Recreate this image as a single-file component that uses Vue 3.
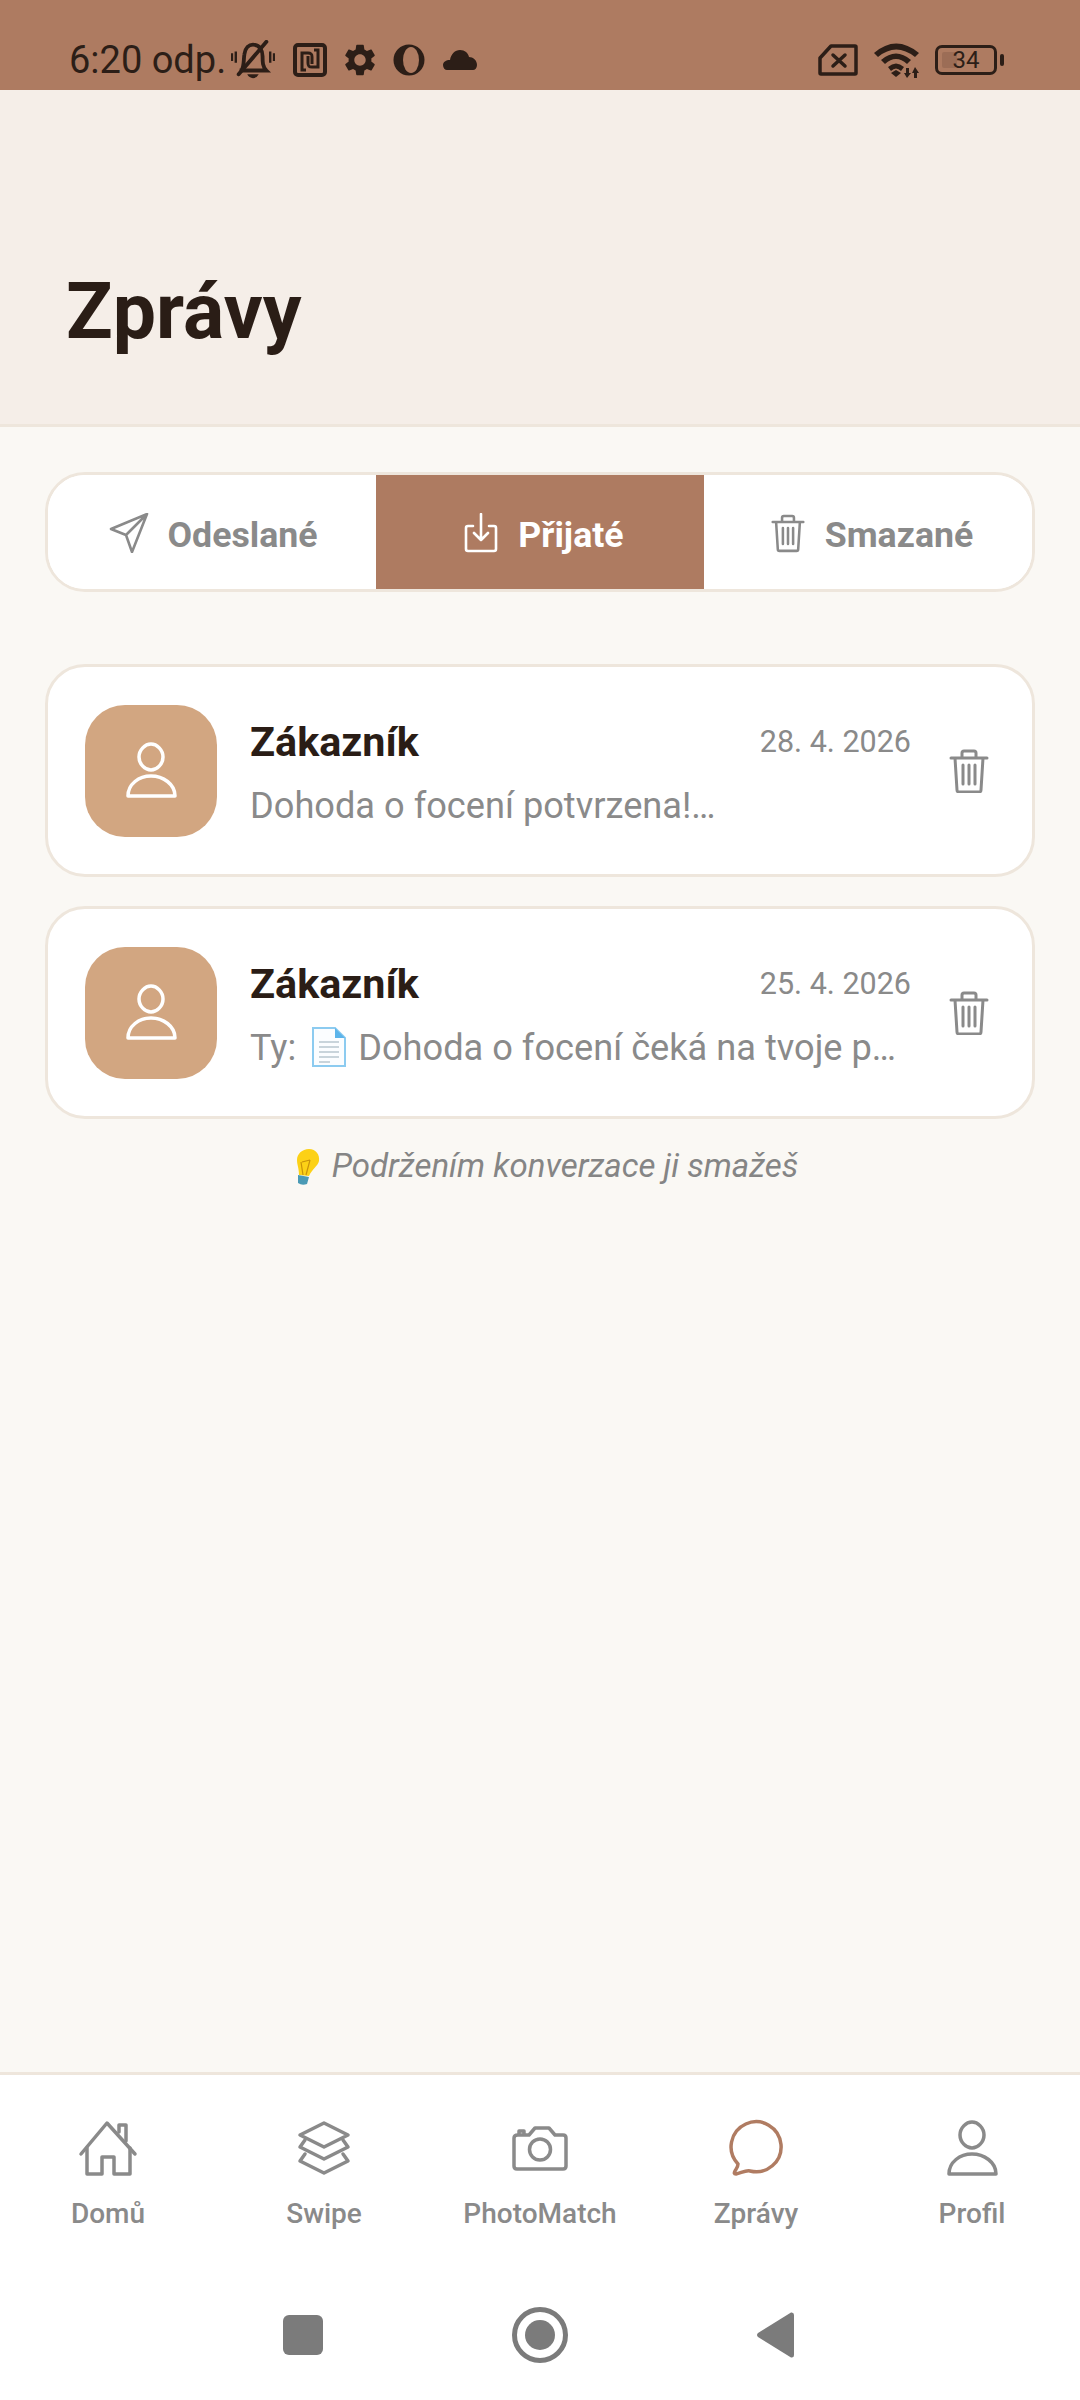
<script setup>
const conversations = [
  { id: 1, name: 'Zákazník', date: '28. 4. 2026', text: 'Dohoda o focení potvrzena!…' },
  { id: 2, name: 'Zákazník', date: '25. 4. 2026', prefix: 'Ty:', text: 'Dohoda o focení čeká na tvoje p…', doc: true },
]

const navItems = [
  { label: 'Domů', paths: ['M3 35 L29 4 L57 35', 'M9 29 V55 H24 V38 H36 V55 H52 V29', 'M41 13 V6 H48 V22'] },
  { label: 'Swipe', paths: ['M30 4 L54 16 L30 28 L6 16 Z', 'M11 21 L6 28 L30 40 L54 28 L49 21', 'M11 35 L6 42 L30 54 L54 42 L49 35'] },
  {
    label: 'PhotoMatch',
    paths: ['M8 16 H19 L25 9 H39 L45 16 H53 Q56 16 56 19 V47 Q56 50 53 50 H7 Q4 50 4 47 V19 Q4 16 8 16 Z', 'M30 20 A10.5 10.5 0 1 0 30 41 A10.5 10.5 0 1 0 30 20 Z', 'M9 15 V12 H14 V15'],
  },
  { label: 'Zprávy', active: true, paths: ['M12 45 A25 25 0 1 1 24 52 C20 51 15 54 10 55 C8 55 8 54 9 52 C10 50 12 48 12 45 Z'] },
  { label: 'Profil', paths: ['M30 3 C36 3 42 9 42 16 C42 23 36 29 30 29 C24 29 18 23 18 16 C18 9 24 3 30 3 Z', 'M7 55 C7 43 18 35 30 35 C42 35 54 43 54 55 Z'] },
]

const personPaths = navItems[4].paths
</script>

<template>
  <div class="screen">
    <div class="statusbar">
      <span class="time">6:20 odp.</span>
      <div class="status-icons">
        <svg width="44" height="40" viewBox="0 0 46 40" fill="none" stroke="#2c1e17" stroke-width="4">
          <path d="M11 31 C14 26 13 20 14 14 C15 7 19 4 23 4 C30 4 33 10 33 16 C33 22 33 27 37 31 H9" />
          <path d="M37 1 L8 35" stroke-linecap="round" />
          <path d="M1 13 V21 M5 11 V23 M41 11 V23 M45 13 V21" stroke-width="2.5" />
          <path d="M17 35 H29 Q27 39 23 39 Q19 39 17 35 Z" fill="#2c1e17" stroke="none" />
        </svg>
        <svg width="34" height="34" viewBox="0 0 34 34" fill="none" stroke="#2c1e17" stroke-width="4">
          <rect x="2" y="2" width="30" height="30" rx="3" />
          <path d="M13 27 H9 V10 H15 C19 10 19 12 19 14 V21 M21 7 H25 V24 H19 C15 24 15 22 15 20 V13" stroke-width="3" />
        </svg>
        <svg width="38" height="38" viewBox="0 0 24 24" fill="#2c1e17" class="gear">
          <path d="M19.14 12.94c.04-.3.06-.61.06-.94 0-.32-.02-.64-.07-.94l2.03-1.58c.18-.14.23-.41.12-.61l-1.92-3.32c-.12-.22-.37-.29-.59-.22l-2.39.96c-.5-.38-1.03-.7-1.62-.94l-.36-2.54c-.04-.24-.24-.41-.48-.41h-3.84c-.24 0-.43.17-.47.41l-.36 2.54c-.59.24-1.13.57-1.62.94l-2.39-.96c-.22-.08-.47 0-.59.22L2.74 8.87c-.12.21-.08.47.12.61l2.03 1.58c-.05.3-.09.63-.09.94s.02.64.07.94l-2.03 1.58c-.18.14-.23.41-.12.61l1.92 3.32c.12.22.37.29.59.22l2.39-.96c.5.38 1.03.7 1.62.94l.36 2.54c.05.24.24.41.48.41h3.84c.24 0 .44-.17.47-.41l.36-2.54c.59-.24 1.13-.56 1.62-.94l2.39.96c.22.08.47 0 .59-.22l1.92-3.32c.12-.22.07-.47-.12-.61l-2.01-1.58zM12 15.6c-1.98 0-3.6-1.62-3.6-3.6s1.62-3.6 3.6-3.6 3.6 1.62 3.6 3.6-1.62 3.6-3.6 3.6z" />
        </svg>
        <svg width="32" height="32" viewBox="0 0 32 32">
          <circle cx="16" cy="16" r="15.5" fill="#2c1e17" />
          <ellipse cx="18" cy="16" rx="8" ry="13" fill="#ae7b61" />
        </svg>
        <svg width="34" height="20" viewBox="0 0 34 20" fill="#2c1e17">
          <path d="M17 0 C22 0 25 3 26 7 C30 7 34 10 34 15 C34 18 32 20 30 20 H4 C2 20 0 18 0 15 C0 12 3 10 7 10 C8 4 12 0 17 0 Z" />
        </svg>
      </div>
      <div class="status-right">
        <svg width="40" height="32" viewBox="0 0 40 32" fill="none" stroke="#2c1e17" stroke-width="3.5" stroke-linejoin="round">
          <path d="M13 2 H37 Q38 2 38 3 V29 Q38 30 37 30 H3 Q2 30 2 29 V14 Z" />
          <path d="M15 11 L27 22 M27 11 L15 22" stroke-linecap="round" />
        </svg>
        <svg width="47" height="36" viewBox="0 0 47 36" fill="#2c1e17">
          <path d="M1 11 Q23 -8 46 11 L42 15 Q23 0 5 15 Z" />
          <path d="M8 18 Q23 5 38 18 L34 22 Q23 12 12 22 Z" />
          <path d="M15 25 Q23 18 31 25 L28 29 Q23 24 18 29 Z" />
          <path d="M18 31 L23 28 L28 31 L23 35 Z" />
          <path d="M33 26 H36 V31 H38 L34 36 L31 31 H33 Z M41 36 H44 V31 H46 L42 25 L39 31 H41 Z" />
        </svg>
        <div class="battery">
          <div class="battery-fill"></div>
          <span class="battery-text">34</span>
        </div>
        <div class="battery-tip"></div>
      </div>
    </div>

    <header class="page-header">
      <h1>Zprávy</h1>
    </header>

    <main class="content">
      <div class="tabs">
        <button class="tab sent" type="button">
          <svg width="40" height="40" viewBox="0 0 40 40" fill="none" stroke="#8a8a8a" stroke-width="2.6" stroke-linejoin="round">
            <path d="M38 1 L2 16 L17 22 L23 39 Z M38 1 L17 22" />
          </svg>
          Odeslané
        </button>
        <button class="tab active" type="button">
          <svg width="34" height="40" viewBox="0 0 34 40" fill="none" stroke="#fff" stroke-width="2.6" stroke-linecap="round" stroke-linejoin="round">
            <path d="M9 13 H4 Q2 13 2 15 V36 Q2 38 4 38 H30 Q32 38 32 36 V15 Q32 13 30 13 H25" />
            <path d="M17 1 V27 M10 20 L17 27 L24 20" />
          </svg>
          Přijaté
        </button>
        <button class="tab" type="button">
          <svg width="34" height="40" viewBox="0 0 40 44" fill="none" stroke="#8a8a8a" stroke-width="3" stroke-linecap="round" stroke-linejoin="round">
            <path d="M2 9 H38 M13 9 V4 Q13 2 15 2 H25 Q27 2 27 4 V9 M6 9 L8 41 Q8 43 10 43 H30 Q32 43 32 41 L34 9 M14 16 V35 M20 16 V35 M26 16 V35" />
          </svg>
          Smazané
        </button>
      </div>

      <div class="list">
        <article v-for="c in conversations" :key="c.id" class="card">
          <div class="avatar">
            <svg width="60" height="60" viewBox="0 0 60 60" fill="none" stroke="#fff" stroke-width="3.5" stroke-linejoin="round">
              <path v-for="p in personPaths" :key="p" :d="p" />
            </svg>
          </div>
          <div class="card-body">
            <div class="card-top">
              <span class="name">{{ c.name }}</span>
              <span class="date">{{ c.date }}</span>
            </div>
            <p class="preview">
              <template v-if="c.doc">{{ c.prefix }}<svg class="doc" width="34" height="40" viewBox="0 0 34 40">
                <path d="M1 1 H23 L33 11 V39 H1 Z" fill="#fbfdff" stroke="#8ccbf0" stroke-width="2" />
                <path d="M23 1 V11 H33 Z" fill="#5cb4ea" />
                <path d="M7 15 H27 M7 20 H27 M7 25 H27 M7 30 H27 M7 35 H18" stroke="#b9c6d0" stroke-width="1.6" />
              </svg></template>{{ c.text }}
            </p>
          </div>
          <svg class="trash" width="40" height="44" viewBox="0 0 40 44" fill="none" stroke="#8a8a8a" stroke-width="3" stroke-linecap="round" stroke-linejoin="round">
            <path d="M2 9 H38 M13 9 V4 Q13 2 15 2 H25 Q27 2 27 4 V9 M6 9 L8 41 Q8 43 10 43 H30 Q32 43 32 41 L34 9 M14 16 V35 M20 16 V35 M26 16 V35" />
          </svg>
        </article>
      </div>

      <p class="hint">
        <svg width="28" height="37" viewBox="0 0 28 37">
          <path d="M17 1 C24 1 28 7 27 13 C26 18 20 21 17 28 L7 27 C7 20 5 17 5 12 C5 6 10 1 17 1 Z" fill="#fcd116" />
          <path d="M9 14 L11 27 M18 12 L14 27 M10 14 L18 12" stroke="#c8920a" stroke-width="1.2" fill="none" />
          <path d="M6 27 L17 29 L15 36 Q10 38 6 35 Z" fill="#4a9ab5" />
        </svg>
        <em>Podržením konverzace ji smažeš</em>
      </p>
    </main>

    <nav class="bottom-nav">
      <div v-for="item in navItems" :key="item.label" class="nav-item">
        <svg width="60" height="60" viewBox="0 0 60 60" fill="none" :stroke="item.active ? '#b07c62' : '#8a8a8a'" stroke-width="3.5" stroke-linecap="round" stroke-linejoin="round">
          <path v-for="p in item.paths" :key="p" :d="p" />
        </svg>
        <span class="nav-label">{{ item.label }}</span>
      </div>
    </nav>

    <div class="system-nav">
      <div class="sys-square"></div>
      <svg width="56" height="56" viewBox="0 0 56 56">
        <circle cx="28" cy="28" r="25.5" fill="none" stroke="#7b7b7b" stroke-width="5" />
        <circle cx="28" cy="28" r="15" fill="#7b7b7b" />
      </svg>
      <svg width="38" height="46" viewBox="0 0 38 46" fill="#7b7b7b">
        <path d="M1 21 L34 0.5 Q37 0 37 3 V43 Q37 46 34 45.5 L1 25 Q-1 23 1 21 Z" />
      </svg>
    </div>
  </div>
</template>

<style scoped>
.screen {
  width: 1080px;
  height: 2400px;
  display: flex;
  flex-direction: column;
  background: #faf8f4;
  font-family: Roboto, "Noto Sans", sans-serif;
  overflow: hidden;
}

.statusbar {
  height: 90px;
  flex-shrink: 0;
  box-sizing: border-box;
  padding: 30px 76px 0 69px;
  display: flex;
  align-items: center;
  background: #ae7b61;
  color: #2c1e17;
}

.time {
  font-size: 38px;
  line-height: 40px;
}

.status-icons {
  display: flex;
  align-items: center;
  gap: 18px;
  margin-left: 5px;
}

.gear {
  margin: 0 -4px;
}

.status-right {
  display: flex;
  align-items: center;
  margin-left: auto;
  gap: 15px;
}

.battery {
  position: relative;
  width: 62px;
  height: 30px;
  box-sizing: border-box;
  border: 3px solid #2c1e17;
  border-radius: 7px;
}

.battery-fill {
  position: absolute;
  left: 4px;
  top: 4px;
  bottom: 4px;
  width: 15px;
  background: #9c6d56;
  border-radius: 2px;
}

.battery-text {
  position: absolute;
  inset: 0;
  display: flex;
  align-items: center;
  justify-content: center;
  font-size: 24px;
  color: #2c1e17;
}

.battery-tip {
  width: 4px;
  height: 12px;
  margin-left: -12px;
  background: #2c1e17;
  border-radius: 2px;
}

.page-header {
  height: 337px;
  flex-shrink: 0;
  box-sizing: border-box;
  padding: 0 66px 68px;
  display: flex;
  align-items: flex-end;
  background: #f5eee8;
  border-bottom: 3px solid #eee6dc;
}

h1 {
  margin: 0;
  font-size: 77px;
  line-height: 88px;
  font-weight: 700;
  color: #2a1d16;
}

.content {
  flex: 1;
  padding: 45px 45px 0;
}

.tabs {
  height: 120px;
  box-sizing: border-box;
  display: flex;
  overflow: hidden;
  background: #fff;
  border: 3px solid #eee6dc;
  border-radius: 40px;
}

.tab {
  flex: 0 0 328px;
  box-sizing: border-box;
  display: flex;
  align-items: center;
  justify-content: center;
  gap: 20px;
  padding: 5px 0 0 8px;
  border: none;
  background: #fff;
  font-family: inherit;
  font-size: 35.7px;
  font-weight: 700;
  color: #8a8a8a;
}

.tab.sent {
  gap: 18px;
  padding-left: 3px;
}

.tab.active {
  background: #ae7b61;
  color: #fff;
}

.tab svg {
  margin-top: -3px;
}

.list {
  display: flex;
  flex-direction: column;
  gap: 29px;
  margin-top: 72px;
}

.card {
  height: 213px;
  box-sizing: border-box;
  display: flex;
  align-items: center;
  padding: 0 43px 0 37px;
  background: #fff;
  border: 3px solid #eee6dc;
  border-radius: 40px;
}

.avatar {
  width: 132px;
  height: 132px;
  flex-shrink: 0;
  display: flex;
  align-items: center;
  justify-content: center;
  background: #d2a681;
  border-radius: 40px;
}

.card-body {
  width: 661px;
  margin-left: 33px;
  min-width: 0;
  padding-top: 5px;
}

.card-top {
  display: flex;
  justify-content: space-between;
  align-items: flex-start;
}

.name {
  font-size: 41.3px;
  line-height: 48px;
  font-weight: 700;
  color: #2a1d16;
}

.date {
  margin-top: 4px;
  font-size: 30.5px;
  line-height: 40px;
  color: #8a8a8a;
}

.preview {
  margin: 18px 0 0;
  font-size: 36.2px;
  line-height: 44px;
  color: #8a8a8a;
  white-space: nowrap;
}

.doc {
  vertical-align: -7px;
  margin: 0 12px 0 16px;
}

.trash {
  margin-left: auto;
  flex-shrink: 0;
}

.hint {
  margin: 25px 0 0;
  padding-left: 10px;
  display: flex;
  align-items: center;
  justify-content: center;
  gap: 12px;
  font-size: 33px;
  line-height: 44px;
  color: #858585;
}

.bottom-nav {
  height: 198px;
  flex-shrink: 0;
  box-sizing: border-box;
  display: flex;
  padding-top: 44px;
  background: #fff;
  border-top: 3px solid #eee6dc;
}

.nav-item {
  flex: 1;
  display: flex;
  flex-direction: column;
  align-items: center;
}

.nav-label {
  margin-top: 18px;
  font-size: 28px;
  line-height: 34px;
  font-weight: 500;
  color: #8a8a8a;
}

.system-nav {
  height: 130px;
  flex-shrink: 0;
  display: flex;
  align-items: center;
  justify-content: space-between;
  box-sizing: border-box;
  padding: 0 285px 0 283px;
  background: #fff;
}

.sys-square {
  width: 40px;
  height: 40px;
  background: #7b7b7b;
  border-radius: 6px;
}
</style>

<style>
html,
body {
  margin: 0;
  padding: 0;
}
</style>
